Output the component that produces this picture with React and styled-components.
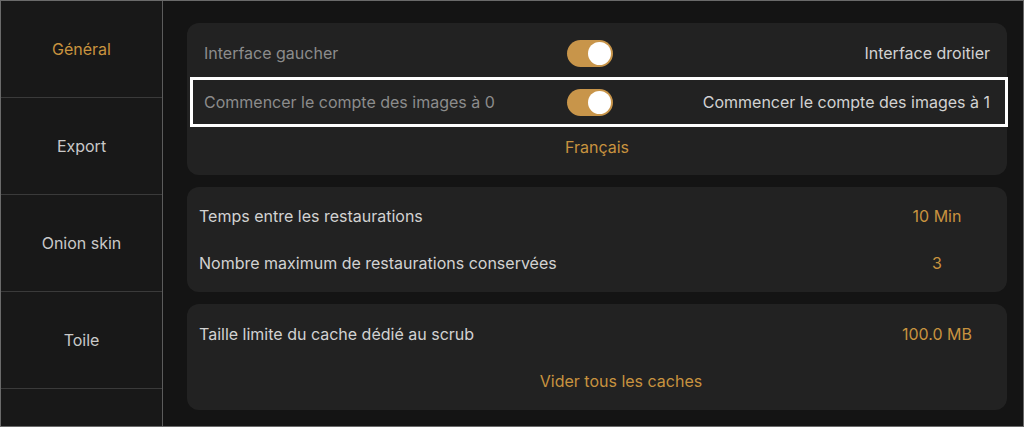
import React from "react";
import styled, { createGlobalStyle } from "styled-components";

const GlobalStyle = createGlobalStyle`
  html, body {
    margin: 0;
    padding: 0;
    background: #141414;
  }
  body {
    font-family: Inter, "Noto Sans", "Liberation Sans", sans-serif;
    -webkit-font-smoothing: antialiased;
  }
`;

const gold = "#c8933f";

const Frame = styled.div`
  box-sizing: border-box;
  width: 1024px;
  height: 427px;
  border: 1px solid #6a6a6a;
  display: flex;
  overflow: hidden;
`;

const Sidebar = styled.nav`
  width: 161px;
  flex-shrink: 0;
  background: #181818;
  border-right: 1px solid #5c5c5c;
  display: flex;
  flex-direction: column;
`;

const NavItem = styled.div`
  height: 96px;
  flex-shrink: 0;
  border-bottom: 1px solid #3a3a3a;
  display: flex;
  align-items: center;
  justify-content: center;
  font-size: 16px;
  color: ${(p) => (p.$active ? gold : "#c9c9c9")};
`;

const Main = styled.main`
  flex: 1;
  background: #141414;
  padding: 22px 16px 16px 24px;
  display: flex;
  flex-direction: column;
  gap: 12px;
`;

const Card = styled.section`
  background: #222222;
  border-radius: 12px;
  padding: ${(p) => p.$pad || "6px 0"};
  display: flex;
  flex-direction: column;
`;

const ToggleRow = styled.div`
  box-sizing: border-box;
  height: ${(p) => (p.$focus ? "50px" : "48px")};
  margin: ${(p) => (p.$focus ? "0 -1px 0 3px" : "0")};
  padding: ${(p) => (p.$focus ? "0 15px 0 11px" : "0 17px")};
  border: ${(p) => (p.$focus ? "3px solid #ffffff" : "none")};
  display: grid;
  grid-template-columns: 1fr 46px 1fr;
  align-items: center;
  font-size: 16px;
`;

const LeftLabel = styled.span`
  color: #8c8c8c;
  white-space: nowrap;
`;

const RightLabel = styled.span`
  color: #d2d2d2;
  text-align: right;
  white-space: nowrap;
`;

const Switch = styled.div`
  position: relative;
  width: 46px;
  height: 27px;
  border-radius: 14px;
  background: #c8954a;
  justify-self: center;
  transform: translateX(-7px);

  &::after {
    content: "";
    position: absolute;
    top: 2px;
    right: 2px;
    width: 23px;
    height: 23px;
    border-radius: 50%;
    background: #ffffff;
  }
`;

const LinkRow = styled.div`
  height: ${(p) => p.$h || "47px"};
  display: flex;
  align-items: center;
  justify-content: center;
  color: ${gold};
  font-size: 16px;
  padding-left: ${(p) => p.$shift || "0"};
`;

const ValueRow = styled.div`
  height: 47px;
  display: flex;
  align-items: center;
  padding-left: 12px;
  font-size: 16px;
  color: #d2d2d2;
`;

const Label = styled.span`
  flex: 1;
`;

const Value = styled.span`
  width: 100px;
  margin-right: 20px;
  text-align: center;
  color: ${gold};
`;

const navItems = ["Général", "Export", "Onion skin", "Toile"];

export default function App() {
  return (
    <>
      <GlobalStyle />
      <Frame>
        <Sidebar>
          {navItems.map((n, i) => (
            <NavItem key={n} $active={i === 0}>
              {n}
            </NavItem>
          ))}
        </Sidebar>
        <Main>
          <Card $pad="6px 0 8px">
            <ToggleRow>
              <LeftLabel>Interface gaucher</LeftLabel>
              <Switch />
              <RightLabel>Interface droitier</RightLabel>
            </ToggleRow>
            <ToggleRow $focus>
              <LeftLabel>Commencer le compte des images à 0</LeftLabel>
              <Switch />
              <RightLabel>Commencer le compte des images à 1</RightLabel>
            </ToggleRow>
            <LinkRow $h="40px">Français</LinkRow>
          </Card>
          <Card $pad="5px 0 6px">
            <ValueRow>
              <Label>Temps entre les restaurations</Label>
              <Value>10 Min</Value>
            </ValueRow>
            <ValueRow>
              <Label>Nombre maximum de restaurations conservées</Label>
              <Value>3</Value>
            </ValueRow>
          </Card>
          <Card $pad="6px 0">
            <ValueRow>
              <Label>Taille limite du cache dédié au scrub</Label>
              <Value>100.0 MB</Value>
            </ValueRow>
            <LinkRow $shift="48px">Vider tous les caches</LinkRow>
          </Card>
        </Main>
      </Frame>
    </>
  );
}
